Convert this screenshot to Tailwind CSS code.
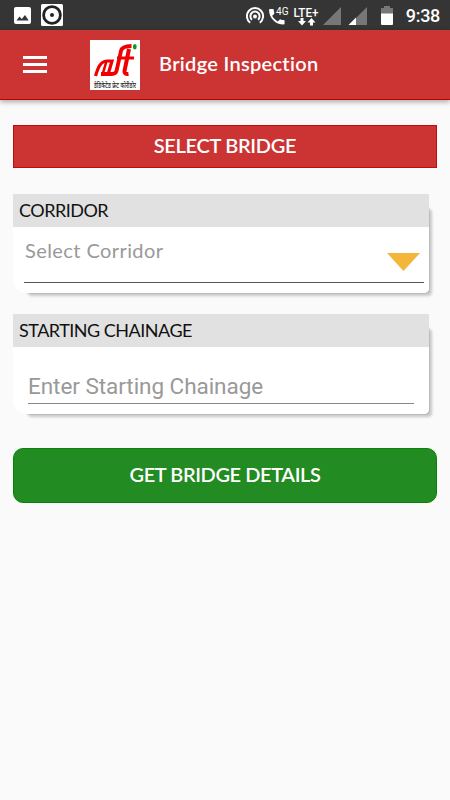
<!DOCTYPE html>
<html lang="en">
<head>
    <meta charset="UTF-8">
    <meta name="viewport" content="width=device-width, initial-scale=1.0">
    <title>Bridge Inspection</title>
    <script src="https://cdn.jsdelivr.net/npm/@tailwindcss/browser@4"></script>
</head>
<body class="bg-[#fafafa] h-[800px] overflow-hidden font-['Lato',sans-serif] [font-variant-ligatures:none]">

    <!-- Status Bar -->
    <div class="h-[30px] bg-[#353535] flex items-center justify-between pl-[14px] pr-[10px] text-white">
        <div class="flex items-center gap-[10px]">
            <svg class="w-[17px] h-[17px]" viewBox="0 0 17 17"><rect width="17" height="17" rx="2" fill="#fff"/><path d="M2.5 13.5l3-4 2.3 2.6 3.2-4.2 3.7 5.6z" fill="#353535"/></svg>
            <svg class="w-[22px] h-[22px]" viewBox="0 0 22 22"><rect width="22" height="22" rx="1.5" fill="#fff"/><circle cx="11" cy="11" r="8.4" fill="none" stroke="#222" stroke-width="2.8"/><circle cx="11" cy="11" r="2" fill="#222"/></svg>
        </div>
        <div class="flex items-center">
            <svg class="w-[154px] h-[30px] mr-[6px]" viewBox="0 0 154 30">
                <!-- hotspot -->
                <g fill="none" stroke="#fff" stroke-width="2">
                    <path d="M4.2 22.7a8.1 8.1 0 1 1 9.6 0"/>
                    <path d="M6 19.7a4.6 4.6 0 1 1 6 0"/>
                </g>
                <circle cx="9" cy="16.5" r="2" fill="#fff"/>
                <!-- call -->
                <path transform="translate(20.5 6.5) scale(.86)" d="M6.6 10.8c1.4 2.8 3.8 5.1 6.6 6.6l2.2-2.2c.3-.3.7-.4 1-.2 1.1.4 2.3.6 3.6.6.6 0 1 .4 1 1V20c0 .6-.4 1-1 1C10.6 21 3 13.4 3 4c0-.6.4-1 1-1h3.5c.6 0 1 .4 1 1 0 1.2.2 2.5.6 3.6.1.4 0 .7-.2 1z" fill="#fff"/>
                <text x="30" y="15" font-family="Roboto" font-size="11.5" fill="#fff" textLength="12.5" lengthAdjust="spacingAndGlyphs">4G</text>
                <!-- data -->
                <text x="47.5" y="16.5" font-family="Roboto" font-size="13.5" font-weight="500" fill="#fff" textLength="25" lengthAdjust="spacingAndGlyphs">LTE+</text>
                <path d="M54.5 18h3v3h2.5l-4 4.5-4-4.5h2.5zM64 25.5h3v-3h2.5l-4-4.5-4 4.5H64z" fill="#fff"/>
                <!-- signal -->
                <path d="M95 7v18H77z" fill="#777"/>
                <path d="M121 7v18h-18z" fill="#777"/>
                <path d="M110 17.5V25h-7.5z" fill="#fff"/>
                <!-- battery -->
                <path d="M138 6h6v2h3v6h-12V8h3z" fill="#777"/>
                <path d="M135 13.5h12V24a1 1 0 0 1-1 1h-10a1 1 0 0 1-1-1z" fill="#fff"/>
            </svg>
            <span class="font-['Roboto',sans-serif] font-medium text-[18px] leading-none tracking-[-0.3px] pt-[2px]">9:38</span>
        </div>
    </div>

    <!-- App Bar -->
    <header class="h-[70px] bg-[#cc3333] border-b border-[#c00000] flex items-center pl-[23px] text-white shadow-[0_2px_5px_rgba(0,0,0,0.32)]">
        <button class="flex flex-col gap-[4px] w-6">
            <span class="h-[3px] bg-white"></span>
            <span class="h-[3px] bg-white"></span>
            <span class="h-[3px] bg-white"></span>
        </button>
        <svg class="w-[50px] h-[50px] ml-[43px] overflow-visible" viewBox="0 0 50 50">
            <rect width="50" height="50" fill="#fff"/>
            <g fill="none" stroke="#f00000">
                <path d="M5.5 36C8 28 10 21.5 17 21H22L18.5 33" stroke-width="3.2"/>
                <path d="M16.500 21L13 33" stroke-width="2.600"/>
                <path d="M11 34H22Q25.500 34 26.500 31L31 11Q32 6 41.500 6" stroke-width="3.800"/>
                <path d="M27 18H44" stroke-width="3"/>
                <path d="M39 9L34.500 31Q34 34.500 38.500 34" stroke-width="4"/>
            </g>
            <ellipse cx="44.8" cy="6.7" rx="1.9" ry="2.7" fill="#0a9a20"/>
            <text x="4" y="48" font-size="7.5" font-weight="500" font-family="'Noto Sans Devanagari','Noto Sans',sans-serif" fill="#222" textLength="42" lengthAdjust="spacingAndGlyphs">डेडिकेटेड फ्रेट कोरीडोर</text>
        </svg>
        <h1 class="ml-[19px] -mt-[3px] text-[20px] leading-6 font-semibold tracking-[0.3px]">Bridge Inspection</h1>
    </header>

    <main class="px-[13px] pt-[25px] flex flex-col">
        <div class="w-[424px] h-[43px] pb-[3px] bg-[#cc3333] border border-[#c40a0a] flex items-center justify-center text-white text-[20px] font-semibold tracking-[-0.3px]">SELECT BRIDGE</div>

        <!-- Corridor -->
        <section class="relative mt-[26px] w-[416px] h-[99px]">
            <div class="absolute left-[12px] top-[12px] right-0 bottom-0 rounded-[4px] shadow-[3px_3px_3px_rgba(0,0,0,0.2),0_0_1px_rgba(0,0,0,0.7)]"></div>
            <div class="relative h-full bg-white rounded-bl-[14px] rounded-br-[5px]">
                <h2 class="h-[33px] pb-px bg-[#e1e1e1] pl-[6px] flex items-center text-[18px] tracking-[-0.5px] text-[#111]">CORRIDOR</h2>
                <div class="ml-[11px] w-[400px] h-[56px] border-b border-[#555] flex items-start justify-between pl-px pr-[4px]">
                    <span class="pt-[11px] text-[20px] leading-6 tracking-[0.42px] text-[#999]">Select Corridor</span>
                    <svg class="mt-[26px] w-[33px] h-[18px]" viewBox="0 0 33 18"><path d="M0 0h33L16.5 18z" fill="#f4b638"/></svg>
                </div>
            </div>
        </section>

        <!-- Starting Chainage -->
        <section class="relative mt-[21px] w-[416px] h-[100px]">
            <div class="absolute left-[12px] top-[12px] right-0 bottom-0 rounded-[4px] shadow-[3px_3px_3px_rgba(0,0,0,0.2),0_0_1px_rgba(0,0,0,0.7)]"></div>
            <div class="relative h-full bg-white rounded-bl-[14px] rounded-br-[5px]">
                <h2 class="h-[33px] pb-px bg-[#e1e1e1] pl-[6px] flex items-center text-[18px] tracking-[-0.5px] text-[#111]">STARTING CHAINAGE</h2>
                <input type="text" placeholder="Enter Starting Chainage" class="block ml-[15px] w-[386px] h-[57px] pt-[21px] border-b border-[#888] outline-none font-['Roboto',sans-serif] text-[22.5px] tracking-[-0.05px] placeholder:text-[#999]">
            </div>
        </section>

        <button class="mt-[34px] w-[424px] h-[55px] pb-[3px] rounded-[10px] bg-[#228b22] border border-[#078407] text-white text-[20px] font-semibold tracking-[-0.4px]">GET BRIDGE DETAILS</button>
    </main>
</body>
</html>
